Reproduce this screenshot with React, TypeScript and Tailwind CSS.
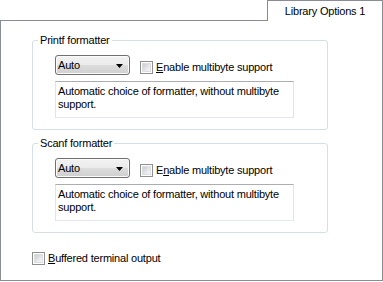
import React from 'react'

function Checkbox() {
  return (
    <div className="w-[13px] h-[13px] shrink-0 border border-[#8e8f8f] bg-white p-[1px]">
      <div className="w-full h-full bg-[linear-gradient(135deg,#c9ccd1_0%,#e4e6e8_55%,#f6f6f6_100%)] border border-[#dcdde0]" />
    </div>
  )
}

function Combo() {
  return (
    <div className="w-[75px] h-[20px] shrink-0 flex items-center justify-between rounded-[3px] border border-[#707070] bg-[linear-gradient(to_bottom,#f2f2f2_0%,#ebebeb_50%,#dddddd_50%,#cfcfcf_100%)] shadow-[inset_0_0_0_1px_#fbfbfb] pl-[2px] pr-[6px]">
      <span className="leading-[13px]">Auto</span>
      <svg width="7" height="4" viewBox="0 0 7 4" className="mt-[1px]">
        <polygon points="0,0 7,0 3.5,4" fill="#000" />
      </svg>
    </div>
  )
}

function FormatterGroup({ title, mnemonic }: { title: string; mnemonic: 'E' | 'n' }) {
  return (
    <div className="relative w-[296px] h-[90px] border border-[#d5dfe5] rounded-[3px] pl-[22px] pt-[14px]">
      <span className="absolute left-[5px] top-[-7px] bg-white px-[2px] leading-[13px]">{title}</span>
      <div className="flex h-[20px]">
        <Combo />
        <div className="ml-[10px] mt-[5px] flex items-center">
          <Checkbox />
          <span className="ml-[3px] leading-[13px]">
            {mnemonic === 'E' ? (
              <>
                <u>E</u>nable multibyte support
              </>
            ) : (
              <>
                E<u>n</u>able multibyte support
              </>
            )}
          </span>
        </div>
      </div>
      <div className="mt-[6px] w-[239px] h-[37px] border border-[#e2e3ea] border-t-[#abadb3] border-b-[#e3e9ef] pl-[2px] pt-[3px] leading-[13px]">
        Automatic choice of formatter, without multibyte
        <br />
        support.
      </div>
    </div>
  )
}

export default function App() {
  return (
    <div className="w-[383px] h-[282px] bg-white text-black text-[11px] font-['Liberation_Sans',Arial,sans-serif] tracking-[-0.2px]">
      <div className="flex h-[21px]">
        <div className="flex-1 border-b border-[#898c95]" />
        <div className="w-[116px] border-t border-l border-r border-[#898c95] flex items-center justify-center pt-[1px] leading-[13px]">
          Library Options 1
        </div>
      </div>
      <div className="h-[260px] border-l border-r border-b border-[#898c95] pl-[31px] pt-[19px]">
        <FormatterGroup title="Printf formatter" mnemonic="E" />
        <div className="mt-[13px]">
          <FormatterGroup title="Scanf formatter" mnemonic="n" />
        </div>
        <div className="mt-[19px] flex items-center">
          <Checkbox />
          <span className="ml-[3px] leading-[13px]">
            <u>B</u>uffered terminal output
          </span>
        </div>
      </div>
    </div>
  )
}
